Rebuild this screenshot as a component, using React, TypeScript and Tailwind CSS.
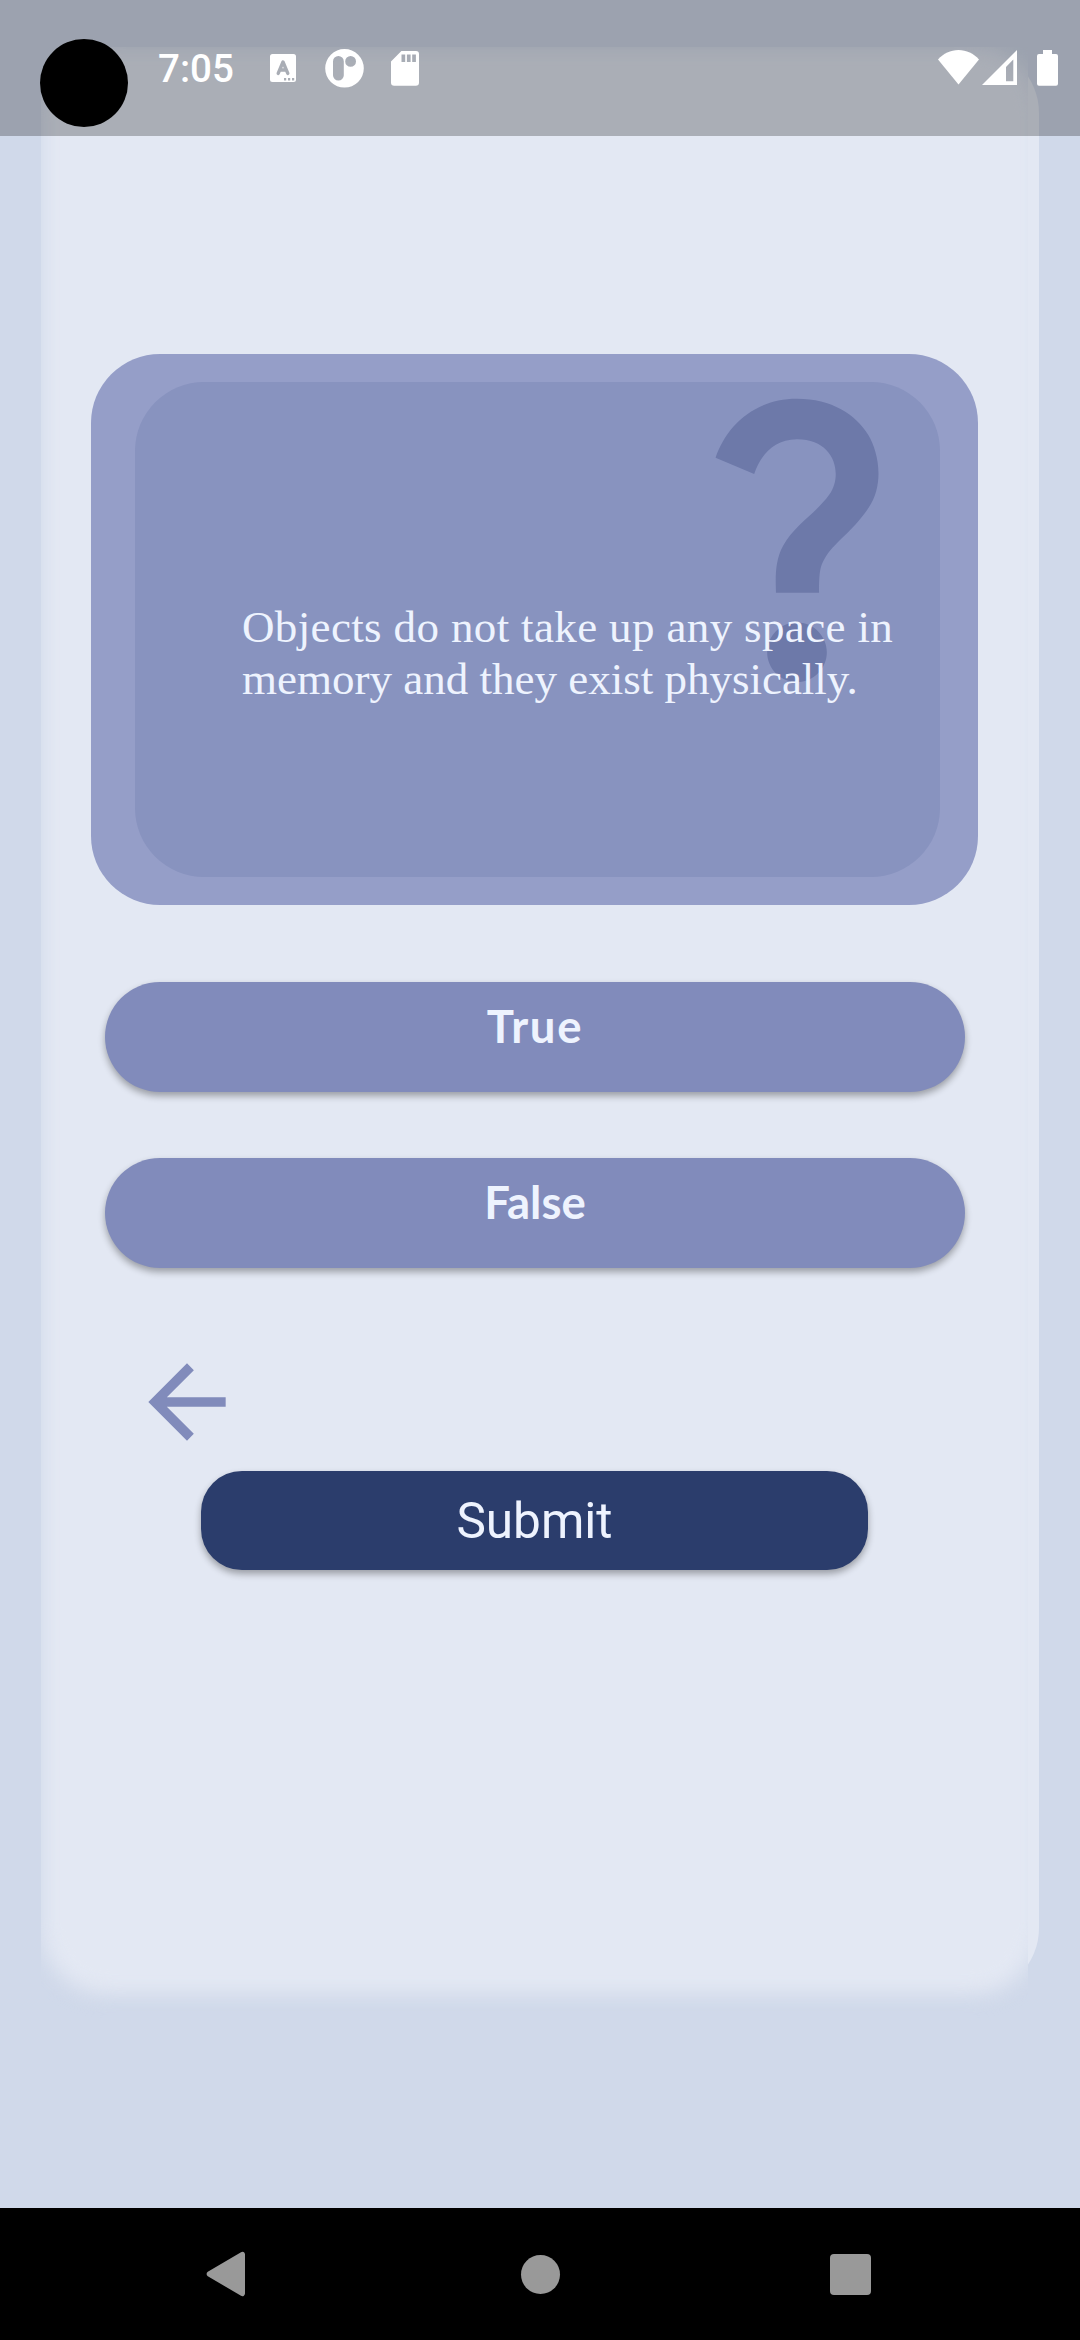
import React from "react";
import { MdArrowBack, MdQuestionMark } from "react-icons/md";

function StatusBar() {
  return (
    <header className="absolute inset-x-0 top-0 z-20 flex h-[136px] items-start bg-black/25 text-white">
      <div className="mt-[39px] ml-[40px] size-[88px] rounded-full bg-black" />
      <span className="mt-[46px] ml-[30px] w-[75px] whitespace-nowrap font-['Roboto'] text-[38.5px] leading-[46px] font-medium">
        7:05
      </span>
      <svg className="mt-[54px] ml-[37px] h-[28px] w-[26px]" viewBox="0 0 26 28" fill="currentColor">
        <path
          fillRule="evenodd"
          d="M2.500 0h21a2.500 2.500 0 0 1 2.500 2.500v23a2.500 2.500 0 0 1-2.500 2.500h-21A2.500 2.500 0 0 1 0 25.500v-23A2.500 2.500 0 0 1 2.500 0zM14 24v2.400h2.200V24zM18 24v2.400h2.200V24zM22 24v2.400h2.200V24z"
        />
        <path d="M8.200 19.400 13 8l4.800 11.400M9.800 16h6.400" fill="none" stroke="#a9adb5" strokeWidth="3.400" strokeLinecap="round" strokeLinejoin="round" />
      </svg>
      <svg className="mt-[49px] ml-[29px] h-[39px] w-[39px]" viewBox="0 0 39 39" fill="currentColor">
        <path
          fillRule="evenodd"
          d="M19.500 0a19.300 19.300 0 1 1 0 38.600a19.300 19.300 0 1 1 0-38.600zM13.400 7a5.400 5.400 0 0 0-5.400 5.400v13.800a5.400 5.400 0 0 0 10.800 0V12.400A5.400 5.400 0 0 0 13.400 7zM25.600 7a5.400 5.400 0 1 0 0 10.800a5.400 5.400 0 1 0 0-10.800z"
        />
      </svg>
      <svg className="mt-[51px] ml-[27px] h-[35px] w-[28px]" viewBox="0 0 28 35" fill="currentColor">
        <path
          fillRule="evenodd"
          d="M10.400 0H25a3 3 0 0 1 3 3v28.500a3.200 3.200 0 0 1-3.200 3.200H3.200A3.200 3.200 0 0 1 0 31.500V10.600zM10.500 3.500v7.500h3.700V3.500zM15.900 3.500v7.500h3.700V3.500zM21.200 3.500v7.500h3.700V3.500z"
        />
      </svg>
      <svg className="mt-[50px] ml-auto h-[35px] w-[41px]" viewBox="0 0 41 35" fill="currentColor">
        <path d="M20.500 34.500 0 9.500C5.500 3.500 12.500 0 20.500 0S35.500 3.500 41 9.500z" />
      </svg>
      <svg className="mt-[50px] ml-[3px] h-[35px] w-[35px]" viewBox="0 0 35 35" fill="currentColor">
        <path fillRule="evenodd" d="M35 0v35H0zM31.300 9.500 24 17v14.200h7.300z" />
      </svg>
      <svg className="mt-[50px] mr-[22px] ml-[20px] h-[36px] w-[21px]" viewBox="0 0 21 36" fill="currentColor">
        <path d="M6 0h9v4h4a2 2 0 0 1 2 2v27.700a2 2 0 0 1-2 2H2a2 2 0 0 1-2-2V6a2 2 0 0 1 2-2h4z" />
      </svg>
    </header>
  );
}

function Backdrop() {
  return (
    <div className="absolute inset-0">
      <div className="absolute top-[47px] left-[41px] h-[1947px] w-[998px] rounded-[66px] bg-[#e3e8f3]" />
      <div className="absolute top-[47px] left-[41px] h-[2100px] w-[987px] overflow-hidden bg-[#d0d9ea]">
        <div className="h-[1947px] w-[998px] rounded-[66px] bg-[#e3e8f3] blur-[10px]" />
      </div>
    </div>
  );
}

function QuestionCard() {
  return (
    <section className="relative mt-[354px] ml-[91px] h-[551px] w-[887px] rounded-[69px] bg-[#959ec8] py-[28px] pr-[38px] pl-[44px]">
      <div className="h-[495px] rounded-[69px] bg-[#8893bf] pt-[219px] pl-[107px]">
        <MdQuestionMark className="absolute top-0 left-[527px] size-[358px] text-[#6d79a9]" />
        <p className="relative font-['Liberation_Serif',serif] text-[45px] leading-[52px] whitespace-nowrap text-[#eef3fe]">
          <span className="block tracking-[0.36px]">Objects do not take up any space in</span>
          <span className="block">memory and they exist physically.</span>
        </p>
      </div>
    </section>
  );
}

function Answer({ children }: { children: React.ReactNode }) {
  return (
    <button className="flex h-[110px] w-[860px] items-start justify-center rounded-full bg-[#818bbb] pt-[16px] font-['Lato',sans-serif] text-[45.5px] leading-[56px] font-bold text-[#eef3fe] shadow-[0_4px_7px_rgba(0,0,0,0.32)]">
      {children}
    </button>
  );
}

function NavBar() {
  return (
    <nav className="absolute inset-x-0 bottom-0 flex h-[132px] items-center bg-black text-[#999999]">
      <svg className="ml-[206px] h-[46px] w-[40px]" viewBox="0 0 40 46" fill="currentColor">
        <path d="M35 1.200a2.600 2.600 0 0 1 4 2.200v39.200a2.600 2.600 0 0 1-4 2.200L1.800 25.200a2.600 2.600 0 0 1 0-4.400z" />
      </svg>
      <div className="ml-[275px] size-[39px] rounded-full bg-[#999999]" />
      <div className="ml-[270px] size-[41px] rounded-[4px] bg-[#999999]" />
    </nav>
  );
}

export default function App() {
  return (
    <div className="relative h-[2340px] w-[1080px] overflow-hidden bg-[#d0d9ea]">
      <Backdrop />
      <StatusBar />
      <main className="relative flex flex-col items-start">
        <QuestionCard />
        <div className="mt-[77px] ml-[105px] flex flex-col gap-[66px]">
          <Answer>
            <span className="tracking-[1.7px]">True</span>
          </Answer>
          <Answer>
            <span>False</span>
          </Answer>
        </div>
        <button className="mt-[76px] ml-[129px] text-[#818bbb]">
          <MdArrowBack className="size-[116px]" />
        </button>
        <button className="mt-[11px] ml-[201px] flex h-[99px] w-[667px] items-center justify-center rounded-[41px] bg-[#2b3d6c] font-['Roboto'] text-[49.5px] leading-[58px] text-[#eef3fe] shadow-[0_4px_7px_rgba(0,0,0,0.32)]">
          Submit
        </button>
      </main>
      <NavBar />
    </div>
  );
}
